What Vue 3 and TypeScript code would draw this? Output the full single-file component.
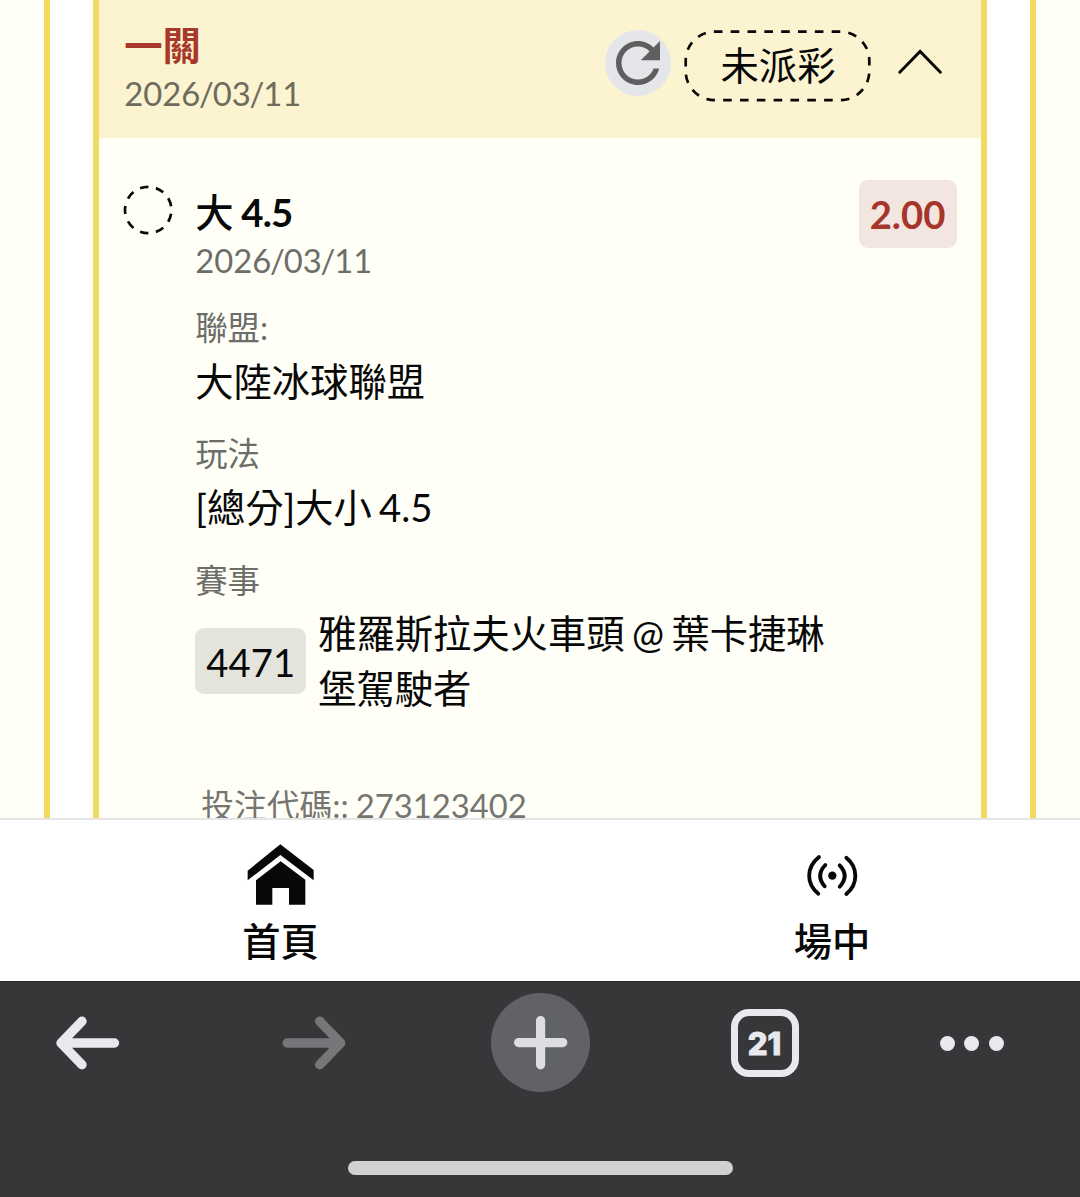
<script setup lang="ts">
interface Detail {
  label: string
  value: string
}

const details: Detail[] = [
  { label: '聯盟:', value: '大陸冰球聯盟' },
  { label: '玩法', value: '[總分]大小 4.5' },
]
const matchCode = '4471'
const matchName = '雅羅斯拉夫火車頭 @ 葉卡捷琳堡駕駛者'
const betCode = '273123402'
const openTabs = 21
</script>

<template>
  <div class="screen">
    <main class="page">
      <section class="outer">
        <article class="card">
          <header class="card-head">
            <div class="head-text">
              <div class="stage">一關</div>
              <div class="date">2026<span class="slash">/</span>03<span class="slash">/</span>11</div>
            </div>
            <button class="refresh" aria-label="refresh">
              <svg width="66" height="66" viewBox="0 0 24 24">
                <path fill="#5f5f60" d="M17.65 6.35C16.2 4.9 14.21 4 12 4c-4.42 0-7.99 3.58-7.99 8s3.57 8 7.99 8c3.73 0 6.84-2.55 7.73-6h-2.08c-.82 2.33-3.04 4-5.65 4-3.31 0-6-2.69-6-6s2.69-6 6-6c1.66 0 3.14.69 4.22 1.78L13 11h7V4l-2.35 2.35z" />
              </svg>
            </button>
            <div class="status">
              <svg class="status-outline" width="188" height="72" viewBox="0 0 188 72">
                <path d="M46.7 1.6H156.3a29 29 0 0 1 29 29V41.2a29 29 0 0 1 -29 29H30.7a29 29 0 0 1 -29 -29V30.6a29 29 0 0 1 29 -29Z" pathLength="453.6" fill="none" stroke="#080808" stroke-width="2.7" stroke-dasharray="8.6 8.2" />
              </svg>
              <span>未派彩</span>
            </div>
            <svg class="chevron" width="44" height="26" viewBox="0 0 44 26">
              <path d="M1.8 23.2 22.1 2.4 42.4 23.2" fill="none" stroke="#080808" stroke-width="2.9" stroke-linecap="round" />
            </svg>
          </header>
          <div class="card-body">
            <svg class="pending" width="50" height="50" viewBox="0 0 50 50">
              <circle cx="25.2" cy="25" r="23.2" pathLength="360" fill="none" stroke="#080808" stroke-width="2.7" stroke-dasharray="21 19" stroke-dashoffset="-9.5" />
            </svg>
            <div class="bet">
              <div class="pick"><span class="side">大</span> <span class="line">4.5</span></div>
              <div class="date pick-date">2026<span class="slash">/</span>03<span class="slash">/</span>11</div>
              <div v-for="d in details" :key="d.label" class="detail">
                <div class="label">{{ d.label }}</div>
                <div class="value">{{ d.value }}</div>
              </div>
              <div class="label">賽事</div>
              <div class="match">
                <span class="match-code">{{ matchCode }}</span>
                <span class="match-name">{{ matchName }}</span>
              </div>
              <div class="bet-code">投注代碼:: {{ betCode }}</div>
            </div>
            <div class="odds">2.00</div>
          </div>
        </article>
      </section>
    </main>

    <nav class="tabs">
      <a class="tab home">
        <svg width="68" height="62" viewBox="0 0 204 186">
          <path d="M2 80 100 1l100 77v31L100 33 2 109ZM27 182v-73l74-57 74 55v75h-49v-50H76v50Z" fill="#080808" />
        </svg>
        <span>首頁</span>
      </a>
      <a class="tab live">
        <svg width="54" height="44" viewBox="0 0 162 132">
          <circle cx="82" cy="65" r="12.5" fill="#080808" />
          <g fill="none" stroke="#080808" stroke-width="11.5" stroke-linecap="round">
            <path d="M61 33Q31 64 59 97M104 34Q134 65 104 98M42 9C3 40 3 90 40 119M124 11C160 40 160 90 124 120" />
          </g>
        </svg>
        <span>場中</span>
      </a>
    </nav>

    <footer class="browser">
      <div class="tools">
        <svg class="back" width="64" height="54" viewBox="0 0 64 54">
          <path d="M26 5.3 5 27 26 48.7M6 27H58.5" fill="none" stroke="#e8e9ec" stroke-width="9.4" stroke-linecap="round" stroke-linejoin="round" />
        </svg>
        <svg class="forward" width="64" height="54" viewBox="0 0 64 54">
          <path d="M37.7 5.3 58.7 27 37.7 48.7M57.7 27H5.2" fill="none" stroke="#767779" stroke-width="9.4" stroke-linecap="round" stroke-linejoin="round" />
        </svg>
        <div class="new-tab">
          <svg width="54" height="54" viewBox="0 0 54 54">
            <path d="M26.6 4.6V48.8M4.6 26.6H48.8" stroke="#dcdee1" stroke-width="9.2" stroke-linecap="round" />
          </svg>
        </div>
        <div class="count">{{ openTabs }}</div>
        <div class="more"><i></i><i></i><i></i></div>
      </div>
      <div class="home-bar"></div>
    </footer>
  </div>
</template>

<style>
body {
  margin: 0;
}
</style>

<style scoped>
* {
  box-sizing: border-box;
}
.screen {
  width: 1080px;
  height: 1197px;
  overflow: hidden;
  font-family: Lato, "Noto Sans CJK TC", sans-serif;
  font-size: 38.3px;
  color: #080808;
  background: #fff;
}
.page {
  height: 818px;
  padding: 0 44px;
  overflow: hidden;
  background: #fffff7;
}
.outer {
  height: 100%;
  padding: 0 43px;
  background: #fff;
  border: solid #f2da60;
  border-width: 0 6px;
}
.card {
  height: 100%;
  background: #fffff7;
  border: solid #f2da60;
  border-width: 0 6px;
}
.card-head {
  display: flex;
  align-items: flex-start;
  height: 138px;
  padding: 0 39px 0 25.2px;
  background: #fcf3d0;
}
.head-text {
  flex: 1;
  padding-top: 19px;
}
.stage {
  line-height: 52px;
  font-weight: 700;
  color: #a7382b;
}
.date {
  font-size: 32.8px;
  line-height: 46px;
  color: #6d6c5c;
}
.slash {
  margin: 0 -1.2px;
}
.refresh {
  width: 66px;
  height: 66px;
  margin: 30px 13.3px 0 0;
  padding: 0;
  border: 0;
  border-radius: 50%;
  background: #e5e6e9;
}
.refresh svg {
  display: block;
}
.status {
  position: relative;
  width: 188px;
  height: 72px;
  margin-top: 30px;
  line-height: 71px;
  text-align: center;
}
.status-outline {
  position: absolute;
  left: 0;
  top: 0;
}
.chevron {
  margin: 49px 0 0 26px;
}
.card-body {
  display: flex;
  align-items: flex-start;
  padding: 0 24.5px 0 24.2px;
}
.pending {
  margin: 47px 22px 0 0;
}
.bet {
  flex: 1;
  padding-top: 47px;
}
.pick {
  line-height: 54px;
  font-weight: 700;
  word-spacing: -1.5px;
}
.side {
  font-weight: 500;
}
.line {
  letter-spacing: -0.8px;
}
.pick-date {
  margin-bottom: 20.5px;
  line-height: 43px;
  color: #6d6d6a;
}
.detail {
  margin-bottom: 20.5px;
}
.label {
  font-size: 32.4px;
  line-height: 50px;
  color: #6d6d6a;
}
.value {
  line-height: 56px;
  word-spacing: -2.5px;
}
.match {
  display: flex;
  align-items: center;
  gap: 12px;
  height: 111px;
}
.match-code {
  width: 111px;
  height: 66px;
  border-radius: 9px;
  background: #e4e4dd;
  line-height: 68px;
  text-align: center;
}
.match-name {
  width: 512px;
  line-height: 55px;
  word-spacing: -2.4px;
}
.bet-code {
  margin: 64px 0 0 6px;
  font-size: 32.8px;
  line-height: 50px;
  color: #757572;
  word-spacing: -1.5px;
}
.odds {
  width: 98px;
  height: 68px;
  margin: 42px 0 0 -98px;
  border-radius: 9px;
  background: #f3e6e0;
  color: #a5362b;
  font-weight: 700;
  line-height: 69px;
  text-align: center;
}
.tabs {
  display: flex;
  height: 163px;
  border-top: 2px solid #e5e5e6;
  background: #fff;
}
.tab {
  display: flex;
  flex-direction: column;
  flex-shrink: 0;
  align-items: center;
  font-weight: 500;
}
.tab span {
  line-height: 54px;
}
.home {
  width: 561px;
}
.home svg {
  margin: 24px 0 8px;
}
.live {
  width: 542px;
  margin-right: -23px;
}
.live svg {
  margin: 34px 0 16px;
}
.browser {
  height: 216px;
  border-top: 1px solid #2a2b2d;
  background: #363739;
}
.tools {
  display: flex;
  align-items: center;
  height: 121px;
}
.back {
  margin-left: 55.5px;
}
.forward {
  margin-left: 162px;
}
.new-tab {
  display: flex;
  align-items: center;
  justify-content: center;
  width: 99px;
  height: 99px;
  margin-left: 145.5px;
  border-radius: 50%;
  background: #606266;
}
.count {
  width: 68px;
  height: 68px;
  margin-left: 140.5px;
  border: 7px solid #e8e9ec;
  border-radius: 18px;
  color: #e8e9ec;
  font: 800 31px/56px Inter, sans-serif;
  text-align: center;
  -webkit-text-stroke: 1px #e8e9ec;
}
.more {
  display: flex;
  gap: 9.5px;
  margin: 2px 0 0 141.3px;
}
.more i {
  width: 15px;
  height: 15px;
  border-radius: 50%;
  background: #e8e9ec;
}
.home-bar {
  width: 385px;
  height: 14px;
  margin: 58px auto 0;
  border-radius: 7px;
  background: #d0d1d1;
}
</style>
